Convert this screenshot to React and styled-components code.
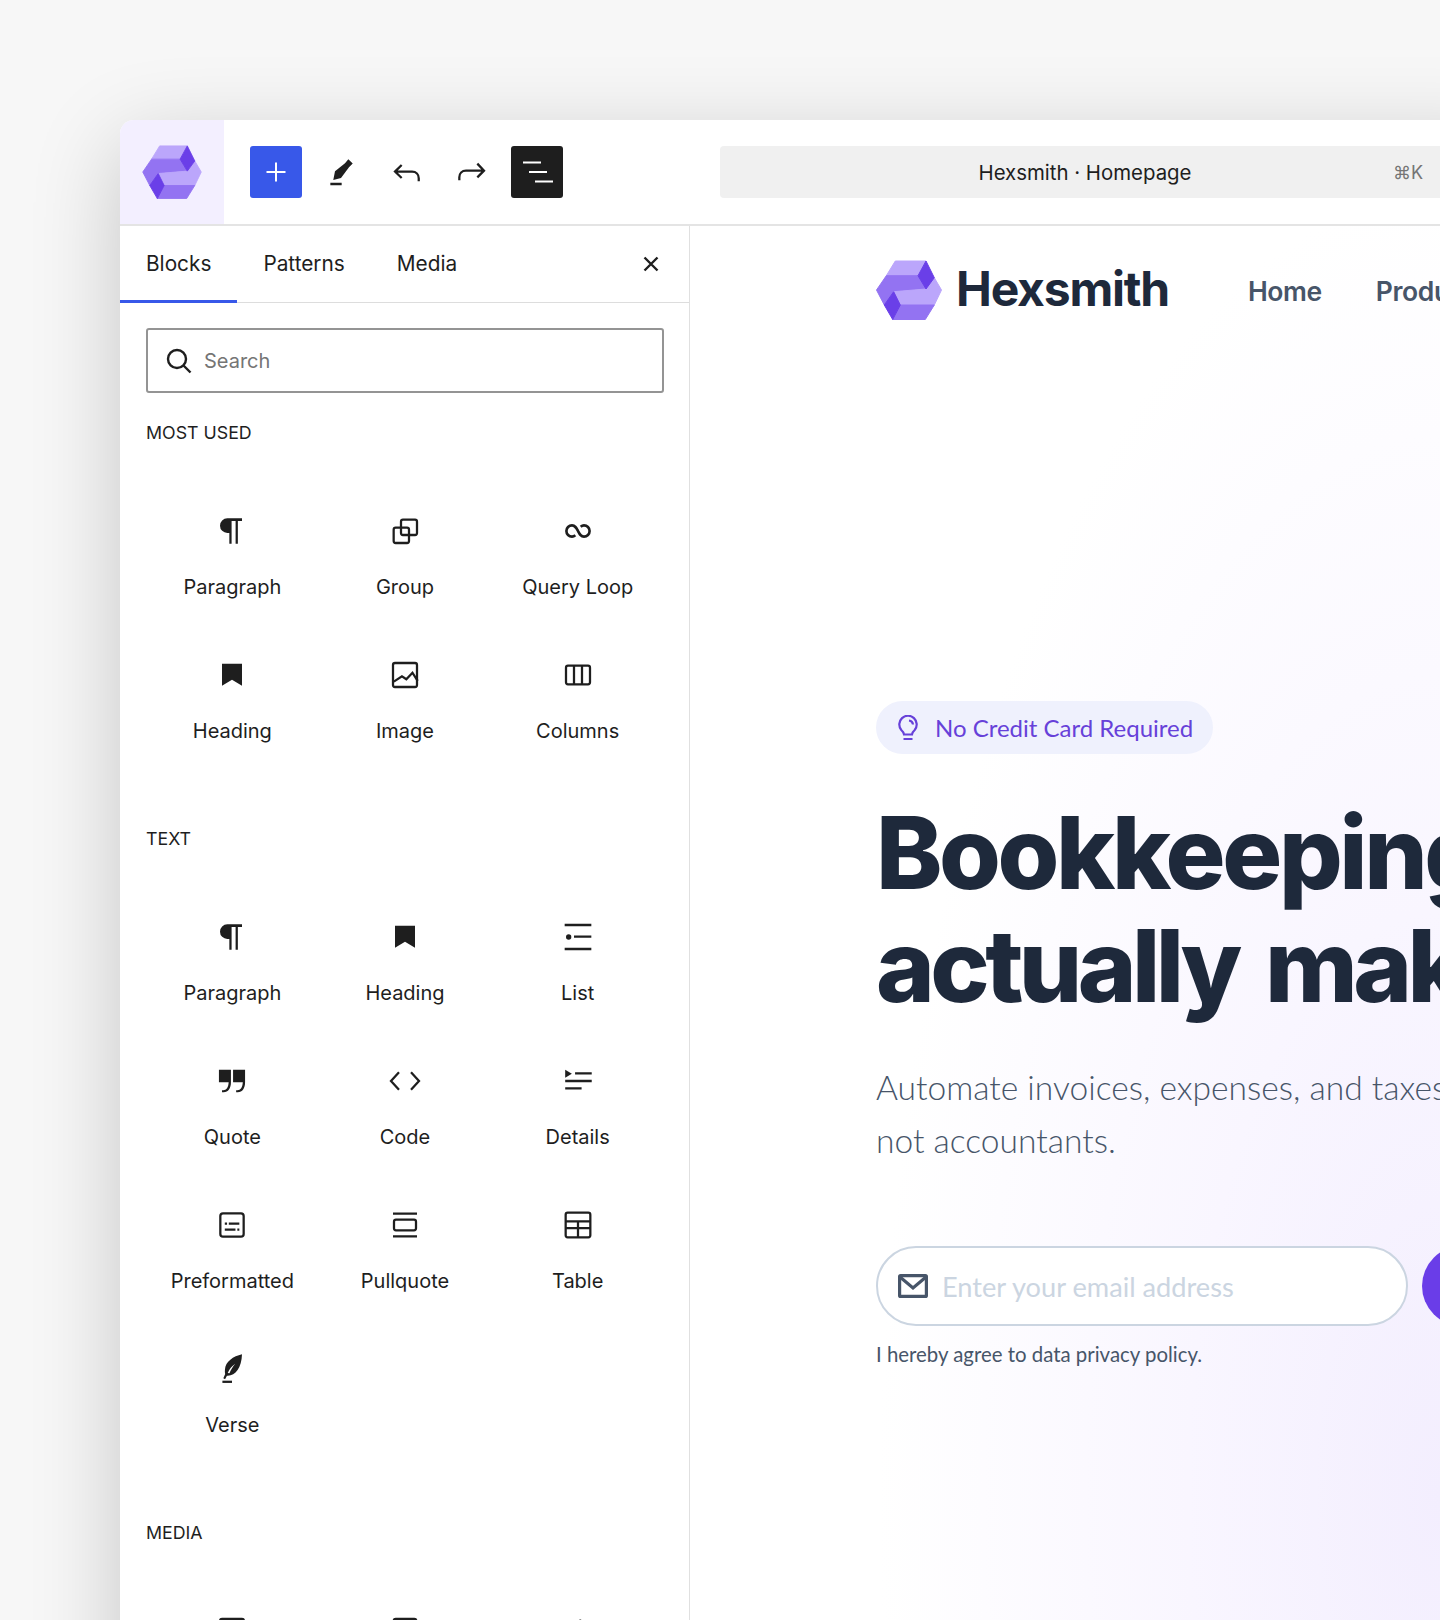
import React from 'react';
import styled, { createGlobalStyle } from 'styled-components';

const GlobalStyle = createGlobalStyle`
  html, body { margin: 0; padding: 0; background: #f7f7f7; }
  * { box-sizing: border-box; }
`;

const Page = styled.div`
  width: 1440px;
  height: 1620px;
  padding: 120px 0 0 120px;
  overflow: hidden;
  background: #f7f7f7;
  font-family: Inter, "Liberation Sans", sans-serif;
  color: #1e1e1e;
`;

const EditorWindow = styled.div`
  width: 1400px;
  height: 1600px;
  background: #fff;
  border-top-left-radius: 14px;
  box-shadow: 0 24px 90px rgba(0, 0, 0, 0.2);
  overflow: hidden;
`;

const TopBar = styled.header`
  display: flex;
  align-items: center;
  height: 106px;
  border-bottom: 2px solid #e4e4e4;
`;

const LogoBox = styled.div`
  display: flex;
  align-items: center;
  justify-content: center;
  flex: none;
  width: 104px;
  height: 104px;
  background: #f3efff;
`;

const Tools = styled.div`
  display: flex;
  align-items: center;
  gap: 13.25px;
  margin-left: 26px;
`;

const ToolButton = styled.button`
  display: flex;
  align-items: center;
  justify-content: center;
  width: 52px;
  height: 52px;
  padding: 0;
  border: none;
  border-radius: 3px;
  color: ${(p) => (p.$variant ? '#fff' : '#1e1e1e')};
  background: ${(p) =>
    p.$variant === 'primary' ? '#3858e9' : p.$variant === 'dark' ? '#1e1e1e' : 'transparent'};
`;

const CommandBar = styled.div`
  position: relative;
  display: flex;
  align-items: center;
  justify-content: center;
  flex: none;
  width: 730px;
  height: 52px;
  margin-left: 157px;
  border-radius: 4px;
  background: #f0f0f0;
  font-size: 20.4px;
`;

const Shortcut = styled.span`
  position: absolute;
  top: 50%;
  left: 673px;
  transform: translateY(-50%);
  font-size: 18px;
  color: #757575;
`;

const Body = styled.div`
  display: flex;
  height: 1494px;
`;

const Sidebar = styled.aside`
  flex: none;
  width: 570px;
  border-right: 1px solid #e0e0e0;
  overflow: hidden;
`;

const TabBar = styled.div`
  display: flex;
  align-items: center;
  height: 77px;
  border-bottom: 1px solid #ddd;
`;

const Tab = styled.div`
  display: flex;
  align-items: center;
  height: 77px;
  padding: 0 26px 2px;
  font-size: 20.8px;
  box-shadow: ${(p) => (p.$active ? 'inset 0 -3px 0 #3858e9' : 'none')};
`;

const CloseButton = styled.button`
  display: flex;
  margin-left: auto;
  margin-right: 30px;
  padding: 0;
  border: none;
  background: none;
  color: #1e1e1e;
`;

const Panel = styled.div`
  padding: 25px 26px 0;
`;

const SearchBox = styled.div`
  display: flex;
  align-items: center;
  gap: 12px;
  width: 518px;
  height: 65px;
  padding: 0 18px;
  border: 2px solid #949494;
  border-radius: 3px;
  font-size: 20px;
  color: #757575;
`;

const SectionLabel = styled.h2`
  margin: ${(p) => (p.$first ? '28px' : '48px')} 0 46px;
  font-size: 17.8px;
  line-height: 24px;
  font-weight: 400;
  text-transform: uppercase;
`;

const BlockGrid = styled.div`
  display: grid;
  grid-template-columns: repeat(3, 1fr);
  grid-auto-rows: 144px;
  margin-right: -1px;
`;

const BlockItem = styled.div`
  display: flex;
  flex-direction: column;
  align-items: center;
  padding-top: 24px;
`;

const BlockLabel = styled.span`
  margin-top: 28px;
  font-size: 20px;
  line-height: 24px;
  white-space: nowrap;
`;

const Canvas = styled.main`
  flex: 1;
  padding: 34px 0 0 186px;
  overflow: hidden;
  background: radial-gradient(ellipse 560px 1300px at 750px 85%, #f3eefe 0%, #f9f6ff 45%, #fff 100%);
`;

const SiteNav = styled.nav`
  display: flex;
  align-items: center;
  height: 60px;
`;

const Brand = styled.span`
  margin-left: 14px;
  padding-bottom: 3px;
  font-size: 48px;
  font-weight: 700;
  letter-spacing: -1.2px;
  color: #1e293b;
`;

const NavLink = styled.a`
  margin-left: ${(p) => p.$gap}px;
  padding-top: 1px;
  font-size: 26.5px;
  font-weight: 600;
  letter-spacing: -0.4px;
  color: #475569;
  white-space: nowrap;
`;

const Badge = styled.div`
  display: inline-flex;
  align-items: center;
  gap: 16px;
  height: 53px;
  margin-top: 381px;
  padding: 0 20px 0 21px;
  border-radius: 27px;
  background: #eff1fd;
  font-family: Lato, Inter, sans-serif;
  font-size: 24px;
  color: #6741d9;
  white-space: nowrap;
`;

const Headline = styled.h1`
  margin: 42px 0 0;
  font-size: 100px;
  line-height: 113px;
  font-weight: 800;
  letter-spacing: -3.4px;
  color: #1e293b;
  white-space: nowrap;
`;

const HeadlineTight = styled.span`
  letter-spacing: -4.6px;
  word-spacing: 10px;
`;

const Lead = styled.p`
  margin: 39px 0 0;
  font-family: Lato, Inter, sans-serif;
  font-size: 33.6px;
  line-height: 53px;
  font-weight: 300;
  color: #475569;
  white-space: nowrap;
`;

const SignupRow = styled.div`
  display: flex;
  gap: 14px;
  margin-top: 79px;
`;

const EmailField = styled.div`
  display: flex;
  align-items: center;
  gap: 14px;
  flex: none;
  width: 532px;
  height: 80px;
  padding: 0 20px;
  border: 2px solid #cbd5e1;
  border-radius: 40px;
  background: #fff;
  font-family: Lato, Inter, sans-serif;
  font-size: 27.2px;
  color: #cbd5e1;
`;

const SubmitButton = styled.button`
  flex: none;
  width: 220px;
  height: 80px;
  border: none;
  border-radius: 40px;
  background: #6a3de8;
`;

const Consent = styled.p`
  margin: 13px 0 0;
  font-family: Lato, Inter, sans-serif;
  font-size: 20.4px;
  line-height: 30px;
  color: #475569;
  white-space: nowrap;
`;

const Glyph = ({ size = 32, children, ...rest }) => (
  <svg width={size} height={size} viewBox="0 0 24 24" fill="none" stroke="currentColor" strokeWidth="1.7" {...rest}>
    {children}
  </svg>
);

const Solid = { fill: 'currentColor', stroke: 'none' };

const ParagraphIcon = () => (
  <Glyph><path {...Solid} d="M19.5 2.5H8.5a5.5 5.5 0 0 0 0 11H10v8h1.7V4.500h3v17h1.700v-17h3.100z" /></Glyph>
);
const GroupIcon = () => (
  <Glyph>
    <rect x="3.5" y="9.5" width="11.5" height="11.5" rx="1.5" />
    <rect x="9" y="3.5" width="12" height="11.5" rx="1.5" />
  </Glyph>
);
const LoopIcon = () => (
  <Glyph strokeWidth="2">
    <path d="M10 15.2C9.3 15.800 8.5 16.200 7.5 16.200a4.200 4.200 0 0 1 0-8.400c2.400 0 3.200 1.700 4.500 4.200s2.100 4.200 4.500 4.200a4.200 4.200 0 0 0 0-8.400c-1 0-1.800.4-2.500 1" />
  </Glyph>
);
const BookmarkIcon = () => (
  <Glyph><path {...Solid} d="M4.5 3.5h15V20l-7.500-4.500L4.500 20z" /></Glyph>
);
const ImageIcon = () => (
  <Glyph>
    <rect x="3" y="3" width="18" height="18" rx="1.5" />
    <path d="M3.6 17L9.7 13l3.300 2.200 4.600-4.900 3.900 6.100" />
  </Glyph>
);
const ColumnsIcon = () => (
  <Glyph>
    <rect x="3" y="5" width="18" height="14" rx="1.5" />
    <path d="M9 5v14M15 5v14" />
  </Glyph>
);
const ListIcon = () => (
  <Glyph>
    <path d="M2 3h20M2 21h20M9 11.7h13" />
    <circle {...Solid} cx="5" cy="12" r="2" />
  </Glyph>
);
const QuoteIcon = () => (
  <Glyph>
    <path {...Solid} d="M2.2 3.5H11.2v9.500c0 4.500-2 7.500-5.500 7.500H4.500V19h1c2.300 0 3.800-2 4-6H2.200z" />
    <path {...Solid} d="M12.8 3.5h9v9.500c0 4.500-2 7.500-5.500 7.500h-1.200V19h1c2.300 0 3.800-2 4-6h-7.300z" />
  </Glyph>
);
const CodeIcon = () => (
  <Glyph><path d="M7.5 5.5L1.5 12l6 6.500M16.5 5.500l6 6.500-6 6.500" /></Glyph>
);
const DetailsIcon = () => (
  <Glyph>
    <path {...Solid} d="M2.4 3.5L7.4 6.500l-5 3z" />
    <path d="M9.8 6.25h12.5M2.4 12h19.900M2.400 17.600h12.300" />
  </Glyph>
);
const PreformattedIcon = () => (
  <Glyph>
    <rect x="3.25" y="3.25" width="17.5" height="17.5" rx="2" />
    <path d="M6.6 11h1.700M9.600 11h7.900M6.600 15.500h8M16 15.500h1.500" />
  </Glyph>
);
const PullquoteIcon = () => (
  <Glyph>
    <path d="M3 3.5h18M3 20.500h18" />
    <rect x="3.75" y="8" width="16.5" height="8" rx="1.5" />
  </Glyph>
);
const TableIcon = () => (
  <Glyph>
    <rect x="2.75" y="2.75" width="18.5" height="18.5" rx="1.5" />
    <path d="M2.75 9.2h18.500M2.750 14.400h18.500M12 9.200v12" />
  </Glyph>
);
const VerseIcon = () => (
  <Glyph>
    <path {...Solid} d="M19.5 1C13 2.500 7 6.500 6.700 12.500c-.1 1.500 0 2.600.2 3.300L5.500 19l1.300.6 1.400-2.600c6 .5 11-5.500 11.300-16zM8.800 15c1.200-3 3-5.200 5.600-7-1.900 2.400-3.300 4.600-4.300 7.100z" />
    <path d="M4.8 21.6H12" />
  </Glyph>
);
const GalleryIcon = () => (
  <Glyph>
    <rect x="3.5" y="3" width="17" height="18" rx="1.5" />
  </Glyph>
);
const AudioIcon = () => (
  <Glyph>
    <path d="M13 4l4 1.500M13 4v13" />
    <circle cx="9.5" cy="17" r="3.5" />
  </Glyph>
);

const HexLogo = ({ width, height }) => (
  <svg width={width} height={height} viewBox="0 0 66 60" strokeLinejoin="round">
    <path fill="#bba6fb" stroke="#bba6fb" d="M19.3 1H50L42 15.700H10.300z" />
    <path fill="#9373f2" stroke="#9373f2" d="M10.3 15.7H42L50 29 17.700 31.700 8.300 45 .5 30z" />
    <path fill="#bba6fb" stroke="#bba6fb" d="M17.7 31.7L50 29l8.300-11.300L65.500 30l-7.200 15H24.300z" />
    <path fill="#9373f2" stroke="#9373f2" d="M24.3 45h34l-9 14.500H16.700z" />
    <path fill="#6a3fe8" stroke="#6a3fe8" d="M50 1l8.300 16.700L50 29 42 15.700z" />
    <path fill="#6a3fe8" stroke="#6a3fe8" d="M17.7 31.7L24.300 45l-7.600 14.500L8.300 45z" />
  </svg>
);

const MOST_USED = [
  { label: 'Paragraph', Icon: ParagraphIcon },
  { label: 'Group', Icon: GroupIcon },
  { label: 'Query Loop', Icon: LoopIcon },
  { label: 'Heading', Icon: BookmarkIcon },
  { label: 'Image', Icon: ImageIcon },
  { label: 'Columns', Icon: ColumnsIcon },
];

const TEXT_BLOCKS = [
  { label: 'Paragraph', Icon: ParagraphIcon },
  { label: 'Heading', Icon: BookmarkIcon },
  { label: 'List', Icon: ListIcon },
  { label: 'Quote', Icon: QuoteIcon },
  { label: 'Code', Icon: CodeIcon },
  { label: 'Details', Icon: DetailsIcon },
  { label: 'Preformatted', Icon: PreformattedIcon },
  { label: 'Pullquote', Icon: PullquoteIcon },
  { label: 'Table', Icon: TableIcon },
  { label: 'Verse', Icon: VerseIcon },
];

// only the tops of these icons are on screen, their labels fall below the page
const MEDIA_BLOCKS = [{ Icon: ImageIcon }, { Icon: GalleryIcon }, { Icon: AudioIcon }];

const Blocks = ({ items }) => (
  <BlockGrid>
    {items.map(({ label, Icon }, i) => (
      <BlockItem key={i}>
        <Icon />
        {label && <BlockLabel>{label}</BlockLabel>}
      </BlockItem>
    ))}
  </BlockGrid>
);

export default function App() {
  return (
    <Page>
      <GlobalStyle />
      <EditorWindow>
        <TopBar>
          <LogoBox>
            <HexLogo width={60} height={54} />
          </LogoBox>
          <Tools>
            <ToolButton $variant="primary">
              <svg width="20" height="20" viewBox="0 0 20 20" stroke="currentColor" strokeWidth="2">
                <path d="M10 .5v19M.5 10h19" />
              </svg>
            </ToolButton>
            <ToolButton>
              <Glyph>
                <path {...Solid} d="M17.5 2.5l3.300 3.100L18 8.500l-6 8-5.800 1.500 1.300-6.500 7.500-6z" />
                <path d="M4 21h8.500" />
              </Glyph>
            </ToolButton>
            <ToolButton>
              <Glyph><path d="M8 6.7l-5 5 5 4.800M3 11.700H15.800c3 0 5 2 5 5v2.200" /></Glyph>
            </ToolButton>
            <ToolButton>
              <Glyph><path d="M16 5.7l5 5.300-5 5M21 11H7.500c-3 0-5 2-5 5v2.200" /></Glyph>
            </ToolButton>
            <ToolButton $variant="dark">
              <svg width="32" height="24" viewBox="0 0 32 24" stroke="currentColor" strokeWidth="2">
                <path d="M2 2.5h18M8 12h18M14 21.500h18" />
              </svg>
            </ToolButton>
          </Tools>
          <CommandBar>
            Hexsmith · Homepage
            <Shortcut>⌘K</Shortcut>
          </CommandBar>
        </TopBar>
        <Body>
          <Sidebar>
            <TabBar>
              <Tab $active>Blocks</Tab>
              <Tab>Patterns</Tab>
              <Tab>Media</Tab>
              <CloseButton>
                <svg width="16" height="16" viewBox="0 0 16 16" stroke="currentColor" strokeWidth="2.4">
                  <path d="M1.5 1.5l13 13M14.500 1.500l-13 13" />
                </svg>
              </CloseButton>
            </TabBar>
            <Panel>
              <SearchBox>
                <svg width="26" height="26" viewBox="0 0 26 26" fill="none" stroke="#1e1e1e" strokeWidth="2.4">
                  <circle cx="11" cy="11" r="9" />
                  <path d="M17.5 17.5l7 7" />
                </svg>
                Search
              </SearchBox>
              <SectionLabel $first>Most used</SectionLabel>
              <Blocks items={MOST_USED} />
              <SectionLabel>Text</SectionLabel>
              <Blocks items={TEXT_BLOCKS} />
              <SectionLabel>Media</SectionLabel>
              <Blocks items={MEDIA_BLOCKS} />
            </Panel>
          </Sidebar>
          <Canvas>
            <SiteNav>
              <HexLogo width={66} height={60} />
              <Brand>Hexsmith</Brand>
              <NavLink $gap={79}>Home</NavLink>
              <NavLink $gap={54}>Product</NavLink>
            </SiteNav>
            <Badge>
              <svg width="22" height="26" viewBox="0 0 22 26" fill="none" stroke="currentColor" strokeWidth="2.2">
                <path d="M7 19.5c-.2-2-1-3-2.700-4.500A8.700 8.700 0 1 1 17.700 15c-1.700 1.500-2.500 2.500-2.700 4.500z" />
                <path d="M12 5.5a4.500 4.500 0 0 1 4 4M6.500 24h9" />
              </svg>
              No Credit Card Required
            </Badge>
            <Headline>
              Bookkeeping
              <br />
              <HeadlineTight>actually makes</HeadlineTight>
            </Headline>
            <Lead>
              Automate invoices, expenses, and taxes
              <br />
              not accountants.
            </Lead>
            <SignupRow>
              <EmailField>
                <svg width="30" height="24" viewBox="0 0 30 24" fill="none" stroke="#475569" strokeWidth="3.2">
                  <rect x="1.6" y="1.6" width="26.8" height="20.8" rx="1" />
                  <path d="M2 3l13 11L28 3" />
                </svg>
                Enter your email address
              </EmailField>
              <SubmitButton aria-label="Submit" />
            </SignupRow>
            <Consent>I hereby agree to data privacy policy.</Consent>
          </Canvas>
        </Body>
      </EditorWindow>
    </Page>
  );
}
